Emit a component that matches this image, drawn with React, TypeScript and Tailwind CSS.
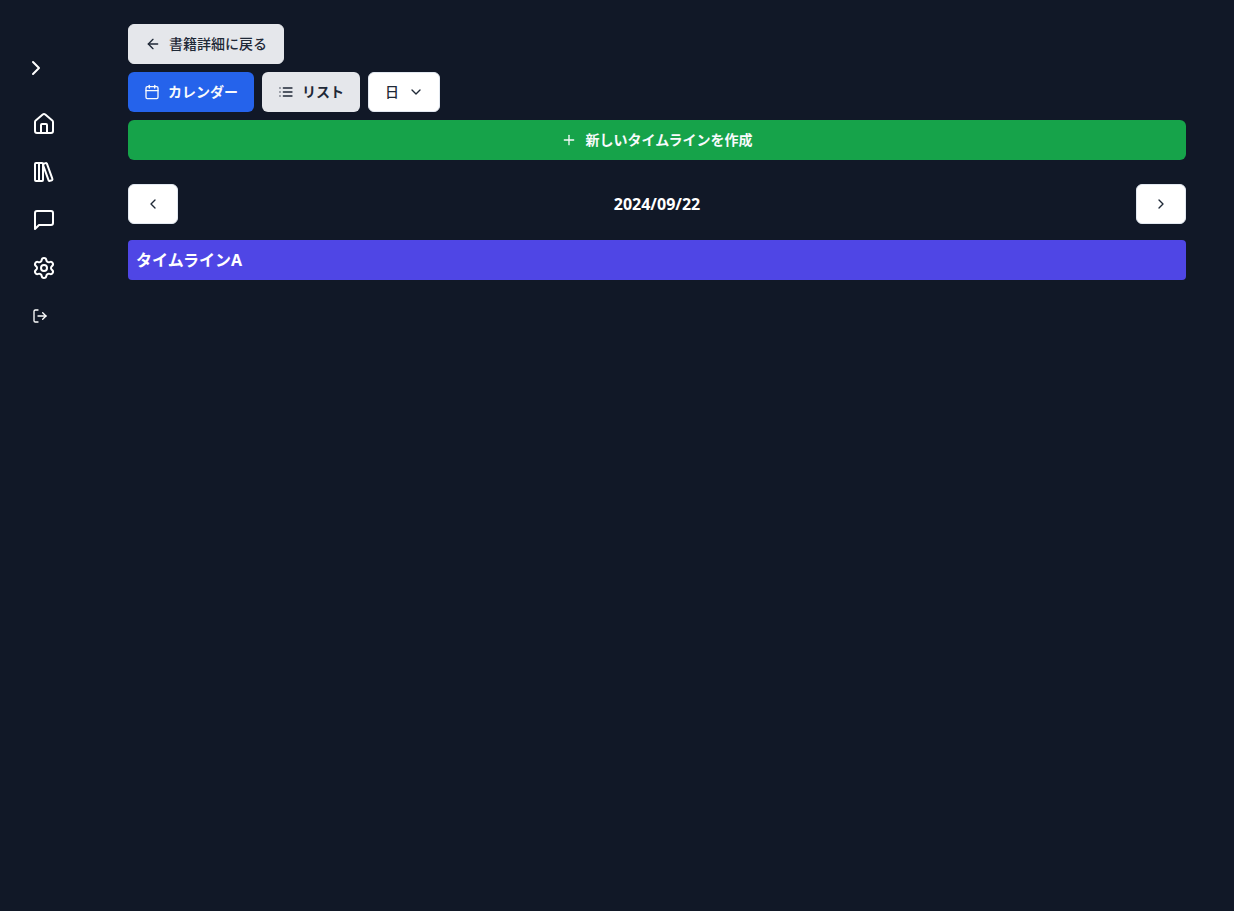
import { useState } from 'react'
import type { ReactNode } from 'react'
import {
  ArrowLeft,
  Calendar,
  ChevronDown,
  ChevronLeft,
  ChevronRight,
  House,
  LibraryBig,
  LogOut,
  Plus,
  Settings,
} from 'lucide-react'

type View = 'calendar' | 'list'

const timelines = [{ id: 1, title: 'タイムラインA', date: '2024/09/22' }]

const formatDate = (d: Date) =>
  `${d.getFullYear()}/${String(d.getMonth() + 1).padStart(2, '0')}/${String(d.getDate()).padStart(2, '0')}`

function MessageIcon() {
  return (
    <svg width="24" height="24" viewBox="0 0 24 24" fill="none" stroke="currentColor" strokeWidth="2" strokeLinecap="round" strokeLinejoin="round" className="shrink-0" aria-hidden="true">
      <path d="M21 15a2 2 0 0 1-2 2H7l-4 4V5a2 2 0 0 1 2-2h14a2 2 0 0 1 2 2z" />
    </svg>
  )
}

function ListIcon() {
  return (
    <svg width="16" height="16" viewBox="0 0 24 24" fill="none" stroke="currentColor" strokeWidth="2" strokeLinecap="round" strokeLinejoin="round" aria-hidden="true">
      <path d="M8 6h13M8 12h13M8 18h13M3 6h.01M3 12h.01M3 18h.01" />
    </svg>
  )
}

function NavLink({ href, label, children }: { href: string; label: string; children: ReactNode }) {
  return (
    <a href={href} aria-label={label} className="flex h-10 items-center rounded-md pl-4 hover:bg-gray-800">
      {children}
    </a>
  )
}

function Sidebar() {
  return (
    <aside className="w-20 shrink-0 px-4 pt-12 text-white">
      <button type="button" aria-label="メニューを開く" className="flex p-2">
        <ChevronRight size={24} />
      </button>
      <nav className="mt-4 flex flex-col gap-2">
        <NavLink href="#home" label="ホーム"><House size={24} /></NavLink>
        <NavLink href="#books" label="書籍"><LibraryBig size={24} /></NavLink>
        <NavLink href="#chat" label="チャット"><MessageIcon /></NavLink>
        <NavLink href="#settings" label="設定"><Settings size={24} /></NavLink>
        <button type="button" aria-label="ログアウト" className="flex h-10 items-center px-4">
          <LogOut size={16} />
        </button>
      </nav>
    </aside>
  )
}

export default function App() {
  const [view, setView] = useState<View>('calendar')
  const [unit, setUnit] = useState('day')
  const [date, setDate] = useState(new Date(2024, 8, 22))

  const move = (step: number) => {
    const next = new Date(date)
    if (unit === 'day') next.setDate(next.getDate() + step)
    if (unit === 'week') next.setDate(next.getDate() + step * 7)
    if (unit === 'month') next.setMonth(next.getMonth() + step)
    setDate(next)
  }

  const tabClass = (v: View) =>
    view === v ? 'bg-[#2563eb] text-[#f8fafc]' : 'bg-[#e5e7eb] text-[#1f2937]'

  const visible = timelines.filter(item => view === 'list' || item.date === formatDate(date))

  return (
    <div className="flex min-h-screen bg-[#111827] font-['Noto_Sans','Noto_Sans_CJK_JP',sans-serif]">
      <Sidebar />

      <main className="min-w-0 flex-1 px-12 py-6">
        {/* 操作ボタン */}
        <div className="flex flex-col gap-2 text-sm font-bold">
          <a href="#book" className="flex h-10 items-center gap-2 self-start rounded-md border border-[#e5e7eb] bg-[#e5e7eb] px-4 font-medium text-[#1f2937]">
            <ArrowLeft size={16} />
            書籍詳細に戻る
          </a>

          <div className="flex flex-wrap gap-2">
            <button type="button" onClick={() => setView('calendar')} className={`flex h-10 items-center gap-2 rounded-md px-4 ${tabClass('calendar')}`}>
              <Calendar size={16} />
              カレンダー
            </button>
            <button type="button" onClick={() => setView('list')} className={`flex h-10 items-center gap-2 rounded-md px-4 ${tabClass('list')}`}>
              <ListIcon />
              リスト
            </button>
            <div className="relative font-medium text-[#1f2937]">
              <select
                aria-label="表示単位"
                value={unit}
                onChange={e => setUnit(e.target.value)}
                className="h-10 appearance-none rounded-md border border-[#e2e8f0] bg-white pr-10 pl-4"
              >
                <option value="day">日</option>
                <option value="week">週</option>
                <option value="month">月</option>
              </select>
              <ChevronDown size={16} className="pointer-events-none absolute top-3 right-4" />
            </div>
          </div>

          <button type="button" className="flex h-10 items-center justify-center gap-2 rounded-md bg-[#16a34a] px-4 text-[#f8fafc]">
            <Plus size={16} />
            新しいタイムラインを作成
          </button>
        </div>

        {/* 日付の切り替え */}
        <div className="mt-6 mb-4 flex items-center justify-between">
          <button type="button" aria-label="前へ" onClick={() => move(-1)} className="flex h-10 items-center rounded-md border border-[#e2e8f0] bg-white px-4 text-[#1f2937]">
            <ChevronLeft size={16} />
          </button>
          <h2 className="font-bold text-white">{formatDate(date)}</h2>
          <button type="button" aria-label="次へ" onClick={() => move(1)} className="flex h-10 items-center rounded-md border border-[#e2e8f0] bg-white px-4 text-[#1f2937]">
            <ChevronRight size={16} />
          </button>
        </div>

        {visible.map(item => (
          <div key={item.id} className="mb-2 rounded-sm bg-[#4f46e5] p-2 font-bold text-white">
            {item.title}
          </div>
        ))}
      </main>
    </div>
  )
}
